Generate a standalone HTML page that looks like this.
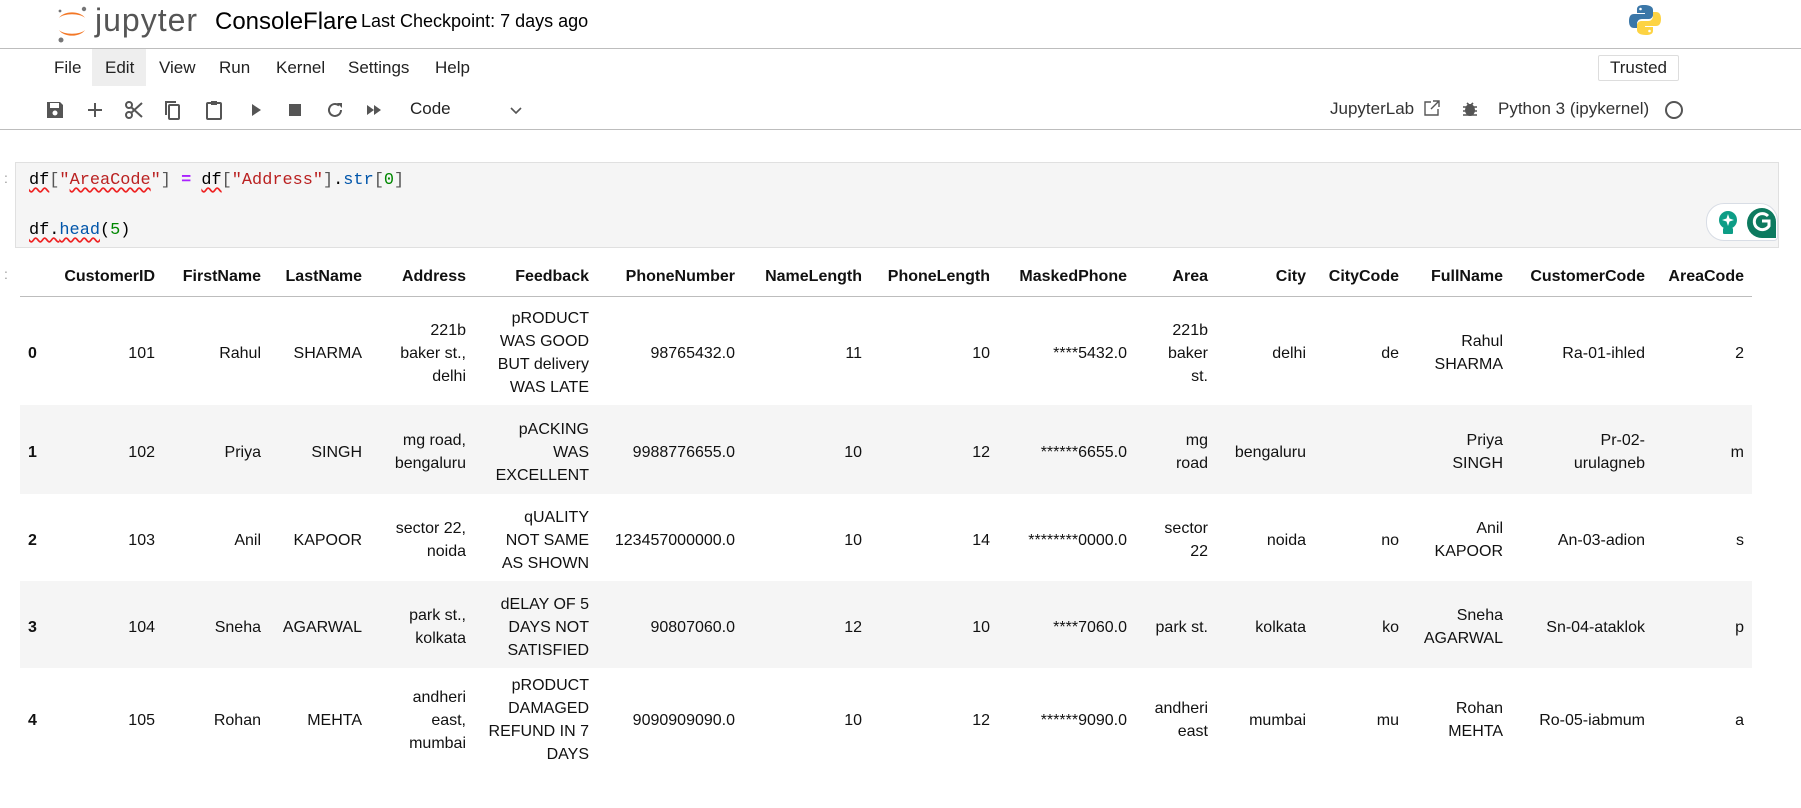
<!DOCTYPE html>
<html><head><meta charset="utf-8"><style>
*{margin:0;padding:0;box-sizing:border-box}
body{width:1801px;height:808px;background:#fff;font-family:"Liberation Sans",sans-serif;color:#000;position:relative;overflow:hidden}
.a{position:absolute;white-space:nowrap}
.menu span{position:absolute;top:58px;font-size:17px;color:#222}
.tb{position:absolute;top:100px}
.code{position:absolute;left:15px;top:162px;width:1764px;height:86px;background:#f5f5f5;border:1px solid #e0e0e0}
.code pre{position:absolute;left:13px;font-family:"Liberation Mono",monospace;font-size:16.9px;color:#000}
.sq{text-decoration:underline wavy #e22;text-underline-offset:3px}
table{position:absolute;left:20px;top:258px;border-collapse:collapse;table-layout:fixed;font-size:16px;color:#111}
td,th{text-align:right;padding:0 8px 0 4px;line-height:23px;white-space:nowrap;vertical-align:middle}
th{height:38px;border-bottom:1px solid #bdbdbd;font-weight:bold;color:#111}
td{padding-top:5px}
td:first-child{text-align:left;font-weight:bold;padding-left:8px}
tr.g td{background:#f5f5f5}
</style></head><body>
<svg class="a" style="left:52px;top:4px" width="40" height="40" viewBox="0 0 40 40">
<path d="M7 14 A14 9 0 0 1 33 14 A14 6 0 0 0 7 14Z" fill="#f37726"/>
<path d="M7 26 A14 9 0 0 0 33 26 A14 6 0 0 1 7 26Z" fill="#f37726"/>
<circle cx="32" cy="5" r="2.2" fill="#767677"/><circle cx="9" cy="36" r="2.5" fill="#767677"/><circle cx="8" cy="7" r="1.4" fill="#767677"/>
</svg>
<div class="a" style="left:95px;top:2px;font-size:32px;color:#555;letter-spacing:1px">jupyter</div>
<div class="a" style="left:215px;top:8px;font-size:24px;color:#000">ConsoleFlare</div>
<div class="a" style="left:361px;top:11px;font-size:18px;color:#000">Last Checkpoint: 7 days ago</div>
<svg class="a" style="left:1628px;top:3px" width="34" height="34" viewBox="0 0 34 34">
<path d="M16 2c-7 0-7 3-7 5v3h8v1H6c-3 0-5 2-5 7s2 7 5 7h3v-4c0-3 2-5 5-5h7c2 0 4-2 4-4V7c0-3-3-5-9-5z" fill="#3b77a8"/>
<path d="M18 32c7 0 7-3 7-5v-3h-8v-1h11c3 0 5-2 5-7s-2-7-5-7h-3v4c0 3-2 5-5 5h-7c-2 0-4 2-4 4v5c0 3 3 5 9 5z" fill="#fdd343"/>
<circle cx="12.5" cy="6" r="1.3" fill="#fff"/><circle cx="21.5" cy="28" r="1.3" fill="#fff"/></svg>
<div class="a" style="left:0;top:48px;width:1801px;height:1px;background:#bdbdbd"></div>
<div class="a" style="left:92px;top:49px;width:54px;height:37px;background:#eee"></div>
<div class="menu"><span style="left:54px">File</span><span style="left:105px">Edit</span><span style="left:159px">View</span><span style="left:219px">Run</span><span style="left:276px">Kernel</span><span style="left:348px">Settings</span><span style="left:435px">Help</span></div>
<div class="a" style="left:1598px;top:55px;width:81px;height:26px;border:1px solid #ddd;border-radius:2px;font-size:17px;text-align:center;line-height:24px;color:#222">Trusted</div>
<svg class="tb" style="left:45px" width="20" height="20" viewBox="0 0 20 20"><path d="M2 2h13l3 3v13H2z" fill="#555"/><rect x="5" y="3" width="9" height="5" fill="#fff"/><circle cx="10" cy="13" r="2.5" fill="#fff"/></svg>
<svg class="tb" style="left:85px" width="20" height="20" viewBox="0 0 20 20"><path d="M10 3v14M3 10h14" stroke="#555" stroke-width="2"/></svg>
<svg class="tb" style="left:124px" width="20" height="20" viewBox="0 0 20 20"><circle cx="5" cy="5" r="3" fill="none" stroke="#555" stroke-width="2"/><circle cx="5" cy="15" r="3" fill="none" stroke="#555" stroke-width="2"/><path d="M7 7l11 10M7 13L18 3" stroke="#555" stroke-width="2"/></svg>
<svg class="tb" style="left:163px" width="20" height="20" viewBox="0 0 20 20"><rect x="6" y="5" width="10" height="14" rx="1" fill="none" stroke="#555" stroke-width="2"/><path d="M3 15V2h10" fill="none" stroke="#555" stroke-width="2"/></svg>
<svg class="tb" style="left:204px" width="20" height="20" viewBox="0 0 20 20"><rect x="3" y="3" width="14" height="16" rx="1" fill="none" stroke="#555" stroke-width="2"/><rect x="7" y="1" width="6" height="4" fill="#555"/></svg>
<svg class="tb" style="left:246px" width="20" height="20" viewBox="0 0 20 20"><path d="M6 4l9 6-9 6z" fill="#555"/></svg>
<svg class="tb" style="left:285px" width="20" height="20" viewBox="0 0 20 20"><rect x="4" y="4" width="12" height="12" fill="#555"/></svg>
<svg class="tb" style="left:325px" width="20" height="20" viewBox="0 0 20 20"><path d="M16 10a6 6 0 1 1-2-4.5" fill="none" stroke="#555" stroke-width="2"/><path d="M12 3h5v5z" fill="#555"/></svg>
<svg class="tb" style="left:364px" width="20" height="20" viewBox="0 0 20 20"><path d="M3 5l7 5-7 5zM10 5l7 5-7 5z" fill="#555"/></svg>
<div class="a" style="left:410px;top:99px;font-size:17px;color:#222">Code</div>
<svg class="a" style="left:509px;top:106px" width="14" height="10" viewBox="0 0 14 10"><path d="M2 2l5 5 5-5" fill="none" stroke="#555" stroke-width="1.6"/></svg>
<div class="a" style="left:1330px;top:99px;font-size:17px;color:#333">JupyterLab</div>
<svg class="a" style="left:1423px;top:99px" width="18" height="18" viewBox="0 0 18 18"><path d="M8 3H2v13h13v-6M10 2h6v6M16 2L8 10" fill="none" stroke="#555" stroke-width="1.4"/></svg>
<svg class="a" style="left:1462px;top:100px" width="16" height="18" viewBox="0 0 16 18"><ellipse cx="8" cy="10" rx="5" ry="6" fill="#555"/><path d="M1 7h14M1 11h14M1 15h14M5 3l2 2M11 3l-2 2" stroke="#555" stroke-width="1.6"/></svg>
<div class="a" style="left:1498px;top:99px;font-size:17px;color:#333">Python 3 (ipykernel)</div>
<div class="a" style="left:1665px;top:101px;width:18px;height:18px;border:2px solid #555;border-radius:50%"></div>
<div class="a" style="left:0;top:129px;width:1801px;height:1px;background:#bdbdbd"></div>
<div class="a" style="left:4px;top:170px;color:#999;font-size:14px">:</div>
<div class="code">
<pre style="top:8px"><span class="sq">df</span><span style="color:#555">[</span><span style="color:#ba2121">"<span class="sq">AreaCode</span>"</span><span style="color:#555">]</span> <b style="color:#aa22ff">=</b> <span class="sq">df</span><span style="color:#555">[</span><span style="color:#ba2121">"Address"</span><span style="color:#555">]</span>.<span style="color:#0055aa">str</span><span style="color:#555">[</span><span style="color:#008800">0</span><span style="color:#555">]</span></pre>
<pre style="top:58px"><span class="sq">df.<span style="color:#0055aa">head</span></span>(<span style="color:#008800">5</span>)</pre>
<div class="a" style="left:1690px;top:40px;width:72px;height:38px;background:#fff;border:1px solid #d8dde5;border-radius:18px 18px 4px 18px"></div>
<svg class="a" style="left:1700px;top:46px" width="24" height="28" viewBox="0 0 24 28"><circle cx="12" cy="11" r="9" fill="#0d9d86"/><rect x="7" y="19" width="10" height="6" rx="1" fill="#0d9d86"/><path d="M12 5l1.5 4.5L18 11l-4.5 1.5L12 17l-1.5-4.5L6 11l4.5-1.5z" fill="#fff"/></svg>
<svg class="a" style="left:1731px;top:44px" width="30" height="32" viewBox="0 0 30 32"><path d="M15 1a14 14 0 0 1 14 14v16H15A15 15 0 0 1 15 1z" fill="#0d7a5f"/><path d="M21 9a8 8 0 1 0 1 10v-5h-7" fill="none" stroke="#fff" stroke-width="3"/></svg>
</div>
<div class="a" style="left:4px;top:266px;color:#999;font-size:14px">:</div>
<table>
<colgroup><col style="width:38px"><col style="width:105px"><col style="width:106px"><col style="width:101px"><col style="width:104px"><col style="width:123px"><col style="width:146px"><col style="width:127px"><col style="width:128px"><col style="width:137px"><col style="width:81px"><col style="width:98px"><col style="width:93px"><col style="width:104px"><col style="width:142px"><col style="width:99px"></colgroup>
<tr><th></th><th>CustomerID</th><th>FirstName</th><th>LastName</th><th>Address</th><th>Feedback</th><th>PhoneNumber</th><th>NameLength</th><th>PhoneLength</th><th>MaskedPhone</th><th>Area</th><th>City</th><th>CityCode</th><th>FullName</th><th>CustomerCode</th><th>AreaCode</th></tr>
<tr style="height:109px"><td>0</td><td>101</td><td>Rahul</td><td>SHARMA</td><td>221b<br>baker st.,<br>delhi</td><td>pRODUCT<br>WAS GOOD<br>BUT delivery<br>WAS LATE</td><td>98765432.0</td><td>11</td><td>10</td><td>****5432.0</td><td>221b<br>baker<br>st.</td><td>delhi</td><td>de</td><td>Rahul<br>SHARMA</td><td>Ra-01-ihled</td><td>2</td></tr>
<tr class="g" style="height:89px"><td>1</td><td>102</td><td>Priya</td><td>SINGH</td><td>mg road,<br>bengaluru</td><td>pACKING<br>WAS<br>EXCELLENT</td><td>9988776655.0</td><td>10</td><td>12</td><td>******6655.0</td><td>mg<br>road</td><td>bengaluru</td><td></td><td>Priya<br>SINGH</td><td>Pr-02-<br>urulagneb</td><td>m</td></tr>
<tr style="height:87px"><td>2</td><td>103</td><td>Anil</td><td>KAPOOR</td><td>sector 22,<br>noida</td><td>qUALITY<br>NOT SAME<br>AS SHOWN</td><td>123457000000.0</td><td>10</td><td>14</td><td>********0000.0</td><td>sector<br>22</td><td>noida</td><td>no</td><td>Anil<br>KAPOOR</td><td>An-03-adion</td><td>s</td></tr>
<tr class="g" style="height:87px"><td>3</td><td>104</td><td>Sneha</td><td>AGARWAL</td><td>park st.,<br>kolkata</td><td>dELAY OF 5<br>DAYS NOT<br>SATISFIED</td><td>90807060.0</td><td>12</td><td>10</td><td>****7060.0</td><td>park st.</td><td>kolkata</td><td>ko</td><td>Sneha<br>AGARWAL</td><td>Sn-04-ataklok</td><td>p</td></tr>
<tr style="height:99px"><td>4</td><td>105</td><td>Rohan</td><td>MEHTA</td><td>andheri<br>east,<br>mumbai</td><td>pRODUCT<br>DAMAGED<br>REFUND IN 7<br>DAYS</td><td>9090909090.0</td><td>10</td><td>12</td><td>******9090.0</td><td>andheri<br>east</td><td>mumbai</td><td>mu</td><td>Rohan<br>MEHTA</td><td>Ro-05-iabmum</td><td>a</td></tr>
</table>
</body></html>
